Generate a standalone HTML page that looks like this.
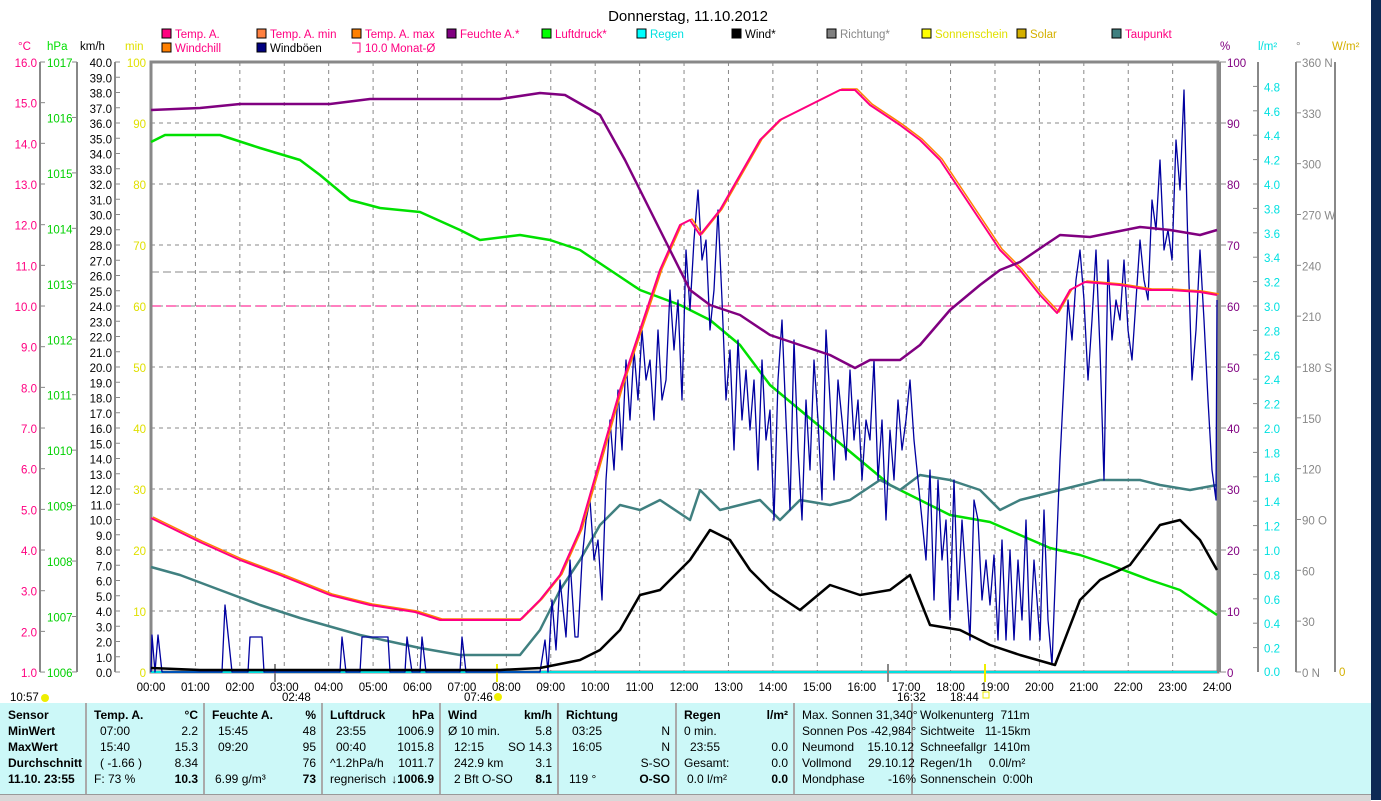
<!DOCTYPE html>
<html><head><meta charset="utf-8"><style>
body{margin:0;width:1381px;height:800px;overflow:hidden;background:#fff;font-family:"Liberation Sans",sans-serif;}
svg{position:absolute;left:0;top:0}
#panel{position:absolute;left:0;top:703px;width:1371px;height:91px;background:#ccf8f8;font-size:12px;}
#rs{position:absolute;left:1371px;top:0;width:10px;height:800px;background:#0d2a55}
#bot{position:absolute;left:0;top:794px;width:1371px;height:6px;background:#d8d8d8;border-top:1px solid #999}
.c{position:absolute;top:0;height:91px;border-right:2px solid #aaa}
.r{position:absolute;white-space:nowrap;font-size:12px;line-height:12px}
.b{font-weight:bold}
</style></head><body>
<svg id="s" width="1381" height="703" font-family="Liberation Sans, sans-serif" font-size="11.5"></svg>
<div id="panel"></div>
<div id="bot"></div>
<div id="rs"></div>
<script>
const s=document.getElementById('s');let h='';
const X=t=>151+44.42*t, Y=p=>672-6.1*p;
h+=`<text x="688" y="21" font-size="15" text-anchor="middle">Donnerstag, 11.10.2012</text>`;
for(let i=1;i<24;i++)h+=`<line x1="${X(i)}" y1="62" x2="${X(i)}" y2="672" stroke="#888" stroke-dasharray="4,4"/>`;
for(let i=1;i<10;i++)h+=`<line x1="151" y1="${Y(i*10)}" x2="1217" y2="${Y(i*10)}" stroke="#888" stroke-dasharray="4,4"/>`;
h+=`<line x1="151" y1="272" x2="1217" y2="272" stroke="#888" stroke-dasharray="8,4"/>`;
h+=`<line x1="151" y1="306" x2="1217" y2="306" stroke="#ff0080" stroke-dasharray="10,5"/>`;
h+=`<rect x="151" y="62" width="1067" height="610" fill="none" stroke="#888" stroke-width="3"/>`;
h+=`<line x1="1220" y1="62" x2="1220" y2="672" stroke="#888" stroke-width="2"/>`;
h+=`<line x1="151" y1="672" x2="1217" y2="672" stroke="#00e0e0" stroke-width="2"/>`;
[[40],[77],[115],[1258],[1296],[1335]].forEach(a=>h+=`<line x1="${a[0]}" y1="62" x2="${a[0]}" y2="672" stroke="#888" stroke-width="2"/>`);
h+=`<text x="18" y="50" fill="#ff0080">°C</text><text x="47" y="50" fill="#00e000">hPa</text><text x="80" y="50">km/h</text><text x="125" y="50" fill="#e0e000">min</text>`;
for(let i=0;i<=15;i++){let y=62+i*40.67;h+=`<text x="37" y="${y+5}" fill="#ff0080" text-anchor="end">${(16-i).toFixed(1)}</text><line x1="40" y1="${y}" x2="45" y2="${y}" stroke="#888"/>`;}
for(let i=0;i<=11;i++){let y=62+i*55.45;h+=`<text x="47" y="${y+5}" fill="#00d000">${1017-i}</text><line x1="72" y1="${y}" x2="77" y2="${y}" stroke="#888"/>`;}
for(let i=0;i<=40;i++){let y=62+i*15.25;h+=`<text x="112" y="${y+5}" text-anchor="end">${(40-i).toFixed(1)}</text><line x1="115" y1="${y}" x2="120" y2="${y}" stroke="#888"/>`;}
for(let i=0;i<=10;i++){let y=Y(100-i*10);h+=`<text x="146" y="${y+5}" fill="#e0e000" text-anchor="end">${100-i*10}</text><text x="1227" y="${y+5}" fill="#800080">${100-i*10}</text><line x1="1220" y1="${y}" x2="1226" y2="${y}" stroke="#888"/>`;}
h+=`<text x="1220" y="50" fill="#800080">%</text><text x="1258" y="50" fill="#00e0e0">l/m²</text><text x="1296" y="50" fill="#888">°</text><text x="1332" y="50" fill="#d4b000">W/m²</text>`;
for(let i=1;i<=24;i++){let y=672-i*24.4;h+=`<text x="1264" y="${y+5}" fill="#00e0e0">${(i*0.2).toFixed(1)}</text><line x1="1253" y1="${y}" x2="1258" y2="${y}" stroke="#888"/>`;}
h+=`<text x="1264" y="676" fill="#00e0e0">0.0</text>`;
const dn={360:' N',270:' W',180:' S',90:' O',0:' N'};
for(let i=0;i<=12;i++){let v=360-i*30,y=62+i*50.83;h+=`<text x="1302" y="${y+5}" fill="#888">${v}${dn[v]||''}</text><line x1="1296" y1="${y}" x2="1301" y2="${y}" stroke="#888"/>`;}
h+=`<text x="1339" y="676" fill="#d4b000">0</text>`;
for(let i=0;i<=24;i++)h+=`<text x="${X(i)}" y="691" text-anchor="middle">${String(i).padStart(2,'0')}:00</text>`;
h+=`<text x="10" y="701">10:57</text><circle cx="45" cy="698" r="4" fill="#ee0"/><text x="282" y="701">02:48</text><text x="464" y="701">07:46</text><circle cx="498" cy="697" r="4" fill="#ee0"/><text x="897" y="701">16:32</text><text x="950" y="701">18:44</text><rect x="983" y="692" width="6" height="6" fill="none" stroke="#ee0"/>`;
h+=`<line x1="275" y1="664" x2="275" y2="682" stroke="#888" stroke-width="2"/><line x1="497" y1="664" x2="497" y2="682" stroke="#ee0" stroke-width="2"/><line x1="888" y1="664" x2="888" y2="682" stroke="#888" stroke-width="2"/><line x1="985" y1="664" x2="985" y2="682" stroke="#ee0" stroke-width="2"/>`;
const L=[[162,38,'#ff0080','Temp. A.','#ff0080'],[257,38,'#ff8040','Temp. A. min','#ff0080'],[352,38,'#ff8000','Temp. A. max','#ff0080'],[447,38,'#800080','Feuchte A.*','#ff0080'],[542,38,'#00ff00','Luftdruck*','#ff0080'],[637,38,'#00ffff','Regen','#00e0e0'],[732,38,'#000','Wind*','#000'],[827,38,'#808080','Richtung*','#888'],[922,38,'#ffff00','Sonnenschein','#e0e000'],[1017,38,'#d4b000','Solar','#d4b000'],[1112,38,'#408080','Taupunkt','#ff0080'],[162,52,'#ff8000','Windchill','#ff0080'],[257,52,'#000080','Windböen','#000']];
L.forEach(l=>h+=`<rect x="${l[0]}" y="${l[1]-9}" width="9" height="9" fill="${l[2]}" stroke="#000"/><text x="${l[0]+13}" y="${l[1]}" fill="${l[4]}">${l[3]}</text>`);
h+=`<path d="M352 43 h8 v9 h-3" fill="none" stroke="#ff0080"/><text x="365" y="52" fill="#ff0080">10.0 Monat-Ø</text>`;
const P=(pts,c,w,tr)=>h+=`<polyline points="${pts}" fill="none" stroke="${c}" stroke-width="${w}" stroke-linejoin="round" ${tr?'transform="'+tr+'"':''}/>`;
const temp="151,518 200,542 240,560 280,575 330,595 370,605 415,612 440,620 520,620 540,600 560,575 580,530 600,460 620,390 640,330 660,270 680,225 690,220 700,235 720,210 740,175 760,140 780,120 800,110 820,100 840,90 855,90 870,105 900,125 920,140 940,160 960,190 980,220 1000,250 1020,270 1040,295 1057,313 1070,290 1085,282 1120,285 1150,290 1170,290 1200,292 1217,295";
P("151,142 165,135 220,135 260,148 300,160 320,175 350,200 380,208 420,212 460,230 480,240 520,235 550,240 580,250 610,270 640,290 680,305 710,320 740,345 770,385 800,410 830,435 860,460 890,485 920,500 950,515 990,522 1020,535 1050,548 1080,555 1110,565 1150,580 1180,590 1217,615",'#00e000',2.5);
P("151,567 180,575 220,590 260,605 300,618 360,635 420,648 460,655 520,655 540,630 560,590 580,560 600,525 620,505 640,510 660,500 690,520 700,490 720,510 760,500 780,520 800,500 830,505 850,500 880,480 900,490 920,475 950,480 980,490 1000,510 1020,500 1040,495 1060,490 1080,485 1100,480 1140,480 1160,485 1190,490 1217,485",'#408080',2.5);
P("151,672 152,635 155,672 158,635 162,672 222,672 225,605 232,672 248,672 250,637 262,637 264,672 340,672 342,637 346,672 360,672 362,637 388,637 390,672 405,672 407,637 412,672 420,672 422,637 426,672 460,672 462,637 466,672 540,672 545,640 548,672 552,600 556,650 560,580 566,637 570,560 575,637 578,637 582,560 586,520 590,500 594,560 598,540 602,600 606,480 610,420 614,470 618,390 622,450 626,360 630,420 634,350 638,400 642,330 646,380 650,360 654,420 658,330 662,400 666,380 670,290 674,350 678,300 682,400 686,250 690,310 694,240 698,190 702,260 706,240 710,330 714,290 718,210 722,300 726,400 730,350 734,450 738,340 742,420 746,370 750,430 754,380 758,470 762,360 766,440 770,410 774,520 778,380 782,320 786,420 790,510 794,340 798,450 802,520 806,400 810,470 814,360 818,420 822,500 826,330 830,400 834,480 838,380 842,420 846,460 850,370 854,440 858,400 862,480 866,420 870,440 874,360 878,480 882,420 886,520 890,430 894,480 898,400 902,450 906,420 910,380 914,440 918,480 922,520 926,560 930,470 934,600 938,480 942,560 946,520 950,620 954,480 958,600 962,520 966,580 970,640 974,500 978,520 982,600 986,560 990,605 994,555 998,640 1002,540 1006,640 1010,550 1014,640 1018,560 1022,620 1026,520 1030,640 1034,560 1040,640 1044,510 1048,620 1052,665 1056,560 1060,460 1064,380 1068,300 1072,340 1076,280 1080,250 1084,300 1088,380 1092,320 1096,250 1100,350 1104,480 1108,260 1112,340 1116,300 1120,320 1124,260 1128,330 1132,360 1136,300 1140,240 1144,280 1148,300 1152,200 1156,230 1160,160 1164,250 1168,230 1172,260 1176,140 1180,190 1184,90 1188,250 1192,380 1196,330 1200,250 1204,320 1208,400 1212,470 1216,500 1217,300",'#0000a0',1.3);
P("151,668 200,670 500,670 540,668 580,660 600,650 620,630 640,595 660,590 690,560 710,530 730,540 750,570 770,590 800,610 830,585 860,595 890,590 910,575 930,625 960,630 990,645 1020,655 1055,665 1080,600 1100,580 1130,565 1160,525 1180,520 1200,540 1217,570",'#000',2.5);
P(temp,'#ff8000',1.5,'translate(2,-1)');P(temp,'#ff0080',2);
P("151,110 200,108 240,104 330,104 370,99 500,99 540,93 565,95 600,115 625,160 650,210 670,250 690,290 710,305 740,315 770,335 800,345 830,355 855,368 870,360 900,360 920,345 950,310 980,285 1000,270 1020,262 1045,245 1060,235 1090,237 1140,227 1170,230 1200,235 1217,230",'#800080',2.5);
s.innerHTML=h;
const cols=[0,87,205,323,441,559,677,795,913,1371];
let p='';
for(let i=1;i<9;i++)p+=`<div class="c" style="left:${cols[i]-2}px;width:0"></div>`;
const rows=[10,26,42,58,74];
function t(x,y,txt,cls,al){p+=`<div class="r ${cls||''}" style="${al?'right:'+(1371-x)+'px':'left:'+x+'px'};top:${rows[y]-4}px">${txt}</div>`;}
['Sensor','MinWert','MaxWert','Durchschnitt','11.10. 23:55'].forEach((v,i)=>t(8,i,v,'b'));
t(94,0,'Temp. A.','b');t(198,0,'°C','b',1);t(100,1,'07:00');t(198,1,'2.2','',1);t(100,2,'15:40');t(198,2,'15.3','',1);t(100,3,'( -1.66 )');t(198,3,'8.34','',1);t(94,4,'F: 73 %');t(198,4,'10.3','b',1);
t(212,0,'Feuchte A.','b');t(316,0,'%','b',1);t(218,1,'15:45');t(316,1,'48','',1);t(218,2,'09:20');t(316,2,'95','',1);t(316,3,'76','',1);t(215,4,'6.99 g/m³');t(316,4,'73','b',1);
t(330,0,'Luftdruck','b');t(434,0,'hPa','b',1);t(336,1,'23:55');t(434,1,'1006.9','',1);t(336,2,'00:40');t(434,2,'1015.8','',1);t(330,3,'^1.2hPa/h');t(434,3,'1011.7','',1);t(330,4,'regnerisch');t(434,4,'↓1006.9','b',1);
t(448,0,'Wind','b');t(552,0,'km/h','b',1);t(448,1,'Ø 10 min.');t(552,1,'5.8','',1);t(454,2,'12:15');t(552,2,'SO 14.3','',1);t(454,3,'242.9 km');t(552,3,'3.1','',1);t(454,4,'2 Bft O-SO');t(552,4,'8.1','b',1);
t(566,0,'Richtung','b');t(572,1,'03:25');t(670,1,'N','',1);t(572,2,'16:05');t(670,2,'N','',1);t(670,3,'S-SO','',1);t(569,4,'119 °');t(670,4,'O-SO','b',1);
t(684,0,'Regen','b');t(788,0,'l/m²','b',1);t(684,1,'0 min.');t(690,2,'23:55');t(788,2,'0.0','',1);t(684,3,'Gesamt:');t(788,3,'0.0','',1);t(687,4,'0.0 l/m²');t(788,4,'0.0','b',1);
t(802,0,'Max. Sonnen 31,340°');t(802,1,'Sonnen Pos -42,984°');t(802,2,'Neumond&nbsp;&nbsp;&nbsp; 15.10.12');t(802,3,'Vollmond&nbsp;&nbsp;&nbsp;&nbsp; 29.10.12');t(802,4,'Mondphase&nbsp;&nbsp;&nbsp;&nbsp;&nbsp;&nbsp; -16%');
t(920,0,'Wolkenunterg&nbsp; 711m');t(920,1,'Sichtweite&nbsp;&nbsp; 11-15km');t(920,2,'Schneefallgr&nbsp; 1410m');t(920,3,'Regen/1h&nbsp;&nbsp;&nbsp;&nbsp; 0.0l/m²');t(920,4,'Sonnenschein&nbsp; 0:00h');
document.getElementById('panel').innerHTML=p;
</script>
</body></html>
